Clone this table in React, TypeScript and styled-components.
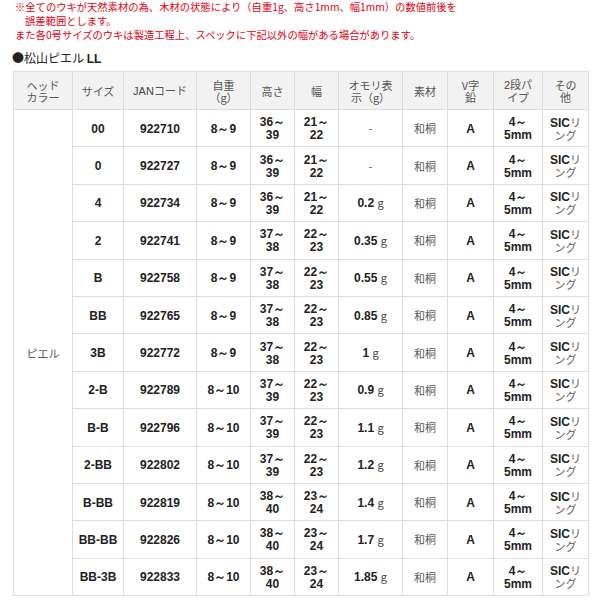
import { FC, ReactNode } from 'react';
import styled, { createGlobalStyle } from 'styled-components';

const GlobalStyle = createGlobalStyle`
  html, body {
    margin: 0;
    padding: 0;
    background: #fff;
  }
  body {
    font-family: "Noto Sans CJK JP", "Liberation Sans", sans-serif;
    color: #333;
  }
`;

const Page = styled.div`
  width: 600px;
  display: flex;
  flex-direction: column;
`;

const Notes = styled.div`
  color: #e60012;
  font-size: 10.3px;
  line-height: 14px;
  padding-left: 15px;
`;

const NoteLine = styled.p<{ indent?: boolean }>`
  margin: 0;
  padding-left: ${({ indent }) => (indent ? '10px' : '0')};
  white-space: nowrap;
`;

const Title = styled.h3`
  margin: 9px 0 0 12px;
  font-size: 12px;
  line-height: 14px;
  font-weight: normal;
  color: #222;
`;

const Num = styled.span`
  font-family: "Liberation Sans Narrow", "Arial Narrow", "Liberation Sans", sans-serif;
  font-weight: bold;
  color: #222;
`;

const HeadNum = styled(Num)`
  font-weight: normal;
  color: #444;
`;

const Table = styled.table`
  margin: 5px 0 0 13px;
  width: 575px;
  border-collapse: collapse;
  table-layout: fixed;
`;

const Th = styled.th`
  background: #f2f2f2;
  border: 1px solid #dddddd;
  color: #555;
  font-weight: normal;
  font-size: 11px;
  line-height: 12px;
  height: 37px;
  padding: 0;
  text-align: center;
  vertical-align: middle;
`;

const Td = styled.td`
  border: 1px solid #dddddd;
  height: 36.4px;
  padding: 0;
  text-align: center;
  vertical-align: middle;
  font-size: 12px;
  line-height: 11px;
`;

const Jp = styled.span`
  font-family: "Noto Sans CJK JP", sans-serif;
  color: #5a5a5a;
  font-size: 11px;
  font-weight: normal;
`;

const Gram = styled.span`
  font-family: "Noto Sans CJK JP", sans-serif;
  font-weight: normal;
  color: #444;
  font-size: 11px;
`;

const widths = [59, 51, 73, 54, 44, 44, 64, 45, 46, 49, 46];

const headers: ReactNode[] = [
  <>ヘッド<br />カラー</>,
  'サイズ',
  <><HeadNum>JAN</HeadNum>コード</>,
  <>自重<br />（g）</>,
  '高さ',
  '幅',
  <>オモリ表<br />示（g）</>,
  '素材',
  <>V字<br />鉛</>,
  <><HeadNum>2</HeadNum>段パ<br />イプ</>,
  <>その<br />他</>,
];

interface Row {
  size: string;
  jan: string;
  weight: string;
  height: [string, string];
  width: [string, string];
  sinker: string;
}

const rows: Row[] = [
  { size: '00', jan: '922710', weight: '8～9', height: ['36', '39'], width: ['21', '22'], sinker: '-' },
  { size: '0', jan: '922727', weight: '8～9', height: ['36', '39'], width: ['21', '22'], sinker: '-' },
  { size: '4', jan: '922734', weight: '8～9', height: ['36', '39'], width: ['21', '22'], sinker: '0.2' },
  { size: '2', jan: '922741', weight: '8～9', height: ['37', '38'], width: ['22', '23'], sinker: '0.35' },
  { size: 'B', jan: '922758', weight: '8～9', height: ['37', '38'], width: ['22', '23'], sinker: '0.55' },
  { size: 'BB', jan: '922765', weight: '8～9', height: ['37', '38'], width: ['22', '23'], sinker: '0.85' },
  { size: '3B', jan: '922772', weight: '8～9', height: ['37', '38'], width: ['22', '23'], sinker: '1' },
  { size: '2-B', jan: '922789', weight: '8～10', height: ['37', '39'], width: ['22', '23'], sinker: '0.9' },
  { size: 'B-B', jan: '922796', weight: '8～10', height: ['37', '39'], width: ['22', '23'], sinker: '1.1' },
  { size: '2-BB', jan: '922802', weight: '8～10', height: ['37', '39'], width: ['22', '23'], sinker: '1.2' },
  { size: 'B-BB', jan: '922819', weight: '8～10', height: ['38', '40'], width: ['23', '24'], sinker: '1.4' },
  { size: 'BB-BB', jan: '922826', weight: '8～10', height: ['38', '40'], width: ['23', '24'], sinker: '1.7' },
  { size: 'BB-3B', jan: '922833', weight: '8～10', height: ['38', '40'], width: ['23', '24'], sinker: '1.85' },
];

const Range: FC<{ v: [string, string] }> = ({ v }) => (
  <Num>
    {v[0]}～<br />
    {v[1]}
  </Num>
);

const App: FC = () => (
  <>
    <GlobalStyle />
    <Page>
      <Notes>
        <NoteLine>※全てのウキが天然素材の為、木材の状態により（自重1g、高さ1mm、幅1mm）の数値前後を</NoteLine>
        <NoteLine indent>誤差範囲とします。</NoteLine>
        <NoteLine>また各0号サイズのウキは製造工程上、スペックに下記以外の幅がある場合があります。</NoteLine>
      </Notes>
      <Title>
        ●松山ピエル <Num>LL</Num>
      </Title>
      <Table>
        <colgroup>
          {widths.map((w, i) => (
            <col key={i} style={{ width: w }} />
          ))}
        </colgroup>
        <thead>
          <tr>
            {headers.map((h, i) => (
              <Th key={i}>{h}</Th>
            ))}
          </tr>
        </thead>
        <tbody>
          {rows.map((r, i) => (
            <tr key={r.jan}>
              {i === 0 && (
                <Td rowSpan={rows.length}>
                  <Jp>ピエル</Jp>
                </Td>
              )}
              <Td><Num>{r.size}</Num></Td>
              <Td><Num>{r.jan}</Num></Td>
              <Td><Num>{r.weight}</Num></Td>
              <Td><Range v={r.height} /></Td>
              <Td><Range v={r.width} /></Td>
              <Td>
                {r.sinker === '-' ? (
                  <Jp>-</Jp>
                ) : (
                  <Num>
                    {r.sinker} <Gram>g</Gram>
                  </Num>
                )}
              </Td>
              <Td><Jp>和桐</Jp></Td>
              <Td><Num>A</Num></Td>
              <Td>
                <Num>4～<br />5mm</Num>
              </Td>
              <Td>
                <Num>SIC</Num>
                <Jp>リ<br />ング</Jp>
              </Td>
            </tr>
          ))}
        </tbody>
      </Table>
    </Page>
  </>
);

export default App;
